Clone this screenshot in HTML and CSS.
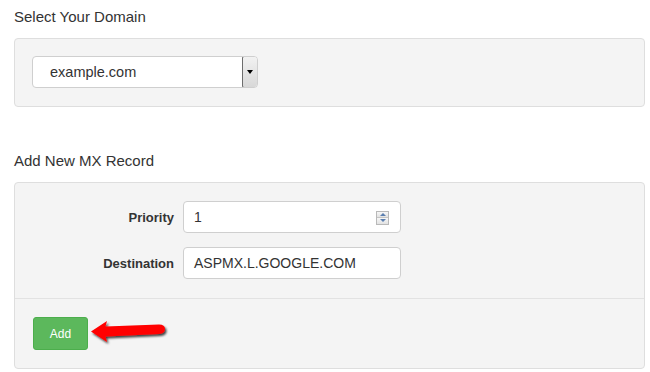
FILE: index.html
```html
<!DOCTYPE html>
<html>
<head>
<meta charset="utf-8">
<link rel="stylesheet" href="styles.css">
</head>
<body>
<div class="page">
  <h2 class="title">Select Your Domain</h2>
  <div class="panel panel-domain">
    <div class="select">
      <span class="select-text">example.com</span>
      <span class="select-btn"><span class="tri-down"></span></span>
    </div>
  </div>

  <h2 class="title title-mx">Add New MX Record</h2>
  <div class="panel panel-mx">
    <div class="panel-body">
      <div class="row">
        <label class="label">Priority</label>
        <div class="input">
          <span class="input-text">1</span>
          <span class="spinner">
            <span class="spin spin-up"><span class="tri-up-s"></span></span>
            <span class="spin spin-down"><span class="tri-down-s"></span></span>
          </span>
        </div>
      </div>
      <div class="row">
        <label class="label">Destination</label>
        <div class="input">
          <span class="input-text">ASPMX.L.GOOGLE.COM</span>
        </div>
      </div>
    </div>
    <div class="panel-footer">
      <button class="btn-add">Add</button>
      <svg class="arrow" width="80" height="28" viewBox="0 0 80 28">
        <defs>
          <filter id="sh" x="-20%" y="-40%" width="140%" height="180%">
            <feDropShadow dx="1.5" dy="2" stdDeviation="1.2" flood-color="#000" flood-opacity="0.75"/>
          </filter>
        </defs>
        <path d="M2 12.5 L18 2 L16.5 7.5 L70 5.5 Q76 5.5 76 10 Q76 14.5 70 15 L16.5 17.5 L18 23 Z" fill="#ff0000" filter="url(#sh)"/>
      </svg>
    </div>
  </div>
</div>
</body>
</html>
```
FILE: styles.css
```css
* { box-sizing: border-box; }
html, body { margin: 0; padding: 0; background: #fff; }
body {
  font-family: "Liberation Sans", Arial, sans-serif;
  color: #333;
}
.page {
  padding: 5px 5px 0 14px;
}
.title {
  margin: 0;
  font-size: 15px;
  font-weight: normal;
  line-height: 20px;
  height: 33px;
  padding-top: 2px;
  color: #333;
}
.title-mx {
  margin-top: 42px;
  height: 33px;
}
.panel {
  background: #f4f4f4;
  border: 1px solid #dedede;
  border-radius: 4px;
}
.panel-domain {
  padding: 17px 17px 18px 17px;
  height: 69px;
}
.select {
  width: 226px;
  height: 32px;
  background: #fff;
  border: 1px solid #cfcfcf;
  border-radius: 4px;
  display: flex;
  align-items: center;
  justify-content: space-between;
  overflow: hidden;
}
.select-text {
  padding-left: 17px;
  font-size: 14.5px;
  color: #333;
}
.select-btn {
  width: 16px;
  height: 32px;
  margin: -1px -1px -1px 0;
  border: 1px solid #6d6d6d;
  border-radius: 2px;
  background: linear-gradient(#f2f2f2, #d8d8d8);
  display: flex;
  align-items: center;
  justify-content: center;
}
.tri-down {
  width: 0; height: 0;
  border-left: 3.5px solid transparent;
  border-right: 3.5px solid transparent;
  border-top: 4px solid #000;
}
.panel-mx {
  height: 187px;
  display: flex;
  flex-direction: column;
}
.panel-body {
  padding: 18px 0 19px 0;
  display: flex;
  flex-direction: column;
  gap: 14px;
  border-bottom: 1px solid #e2e2e2;
}
.row {
  display: flex;
  align-items: center;
  gap: 9px;
}
.label {
  width: 159px;
  text-align: right;
  font-weight: bold;
  font-size: 13px;
  color: #333;
}
.input {
  width: 218px;
  height: 32px;
  background: #fff;
  border: 1px solid #cfcfcf;
  border-radius: 4px;
  display: flex;
  align-items: center;
  justify-content: space-between;
  padding: 0 11px 0 10px;
}
.input-text {
  font-size: 14px;
  color: #333;
}
.spinner {
  display: flex;
  flex-direction: column;
  width: 13px;
  height: 14px;
  border: 1px solid #b9b9b9;
  margin-top: 1px;
}
.spin {
  flex: 1;
  display: flex;
  align-items: center;
  justify-content: center;
  background: linear-gradient(#f7f7f7, #e2e2e2);
}
.spin-up { border-bottom: 1px solid #c5c5c5; }
.tri-up-s {
  width: 0; height: 0;
  border-left: 3px solid transparent;
  border-right: 3px solid transparent;
  border-bottom: 3px solid #5b7fb0;
}
.tri-down-s {
  width: 0; height: 0;
  border-left: 3px solid transparent;
  border-right: 3px solid transparent;
  border-top: 3px solid #5b7fb0;
}
.panel-footer {
  padding: 18px 0 0 18px;
  display: flex;
  align-items: flex-start;
}
.btn-add {
  width: 55px;
  height: 33px;
  background: #5cb85c;
  border: 1px solid #4cae4c;
  border-radius: 3px;
  color: #fff;
  font-family: "Liberation Sans", Arial, sans-serif;
  font-size: 12px;
  padding: 0;
}
.arrow {
  margin-left: 1px;
  margin-top: 2px;
}
```
